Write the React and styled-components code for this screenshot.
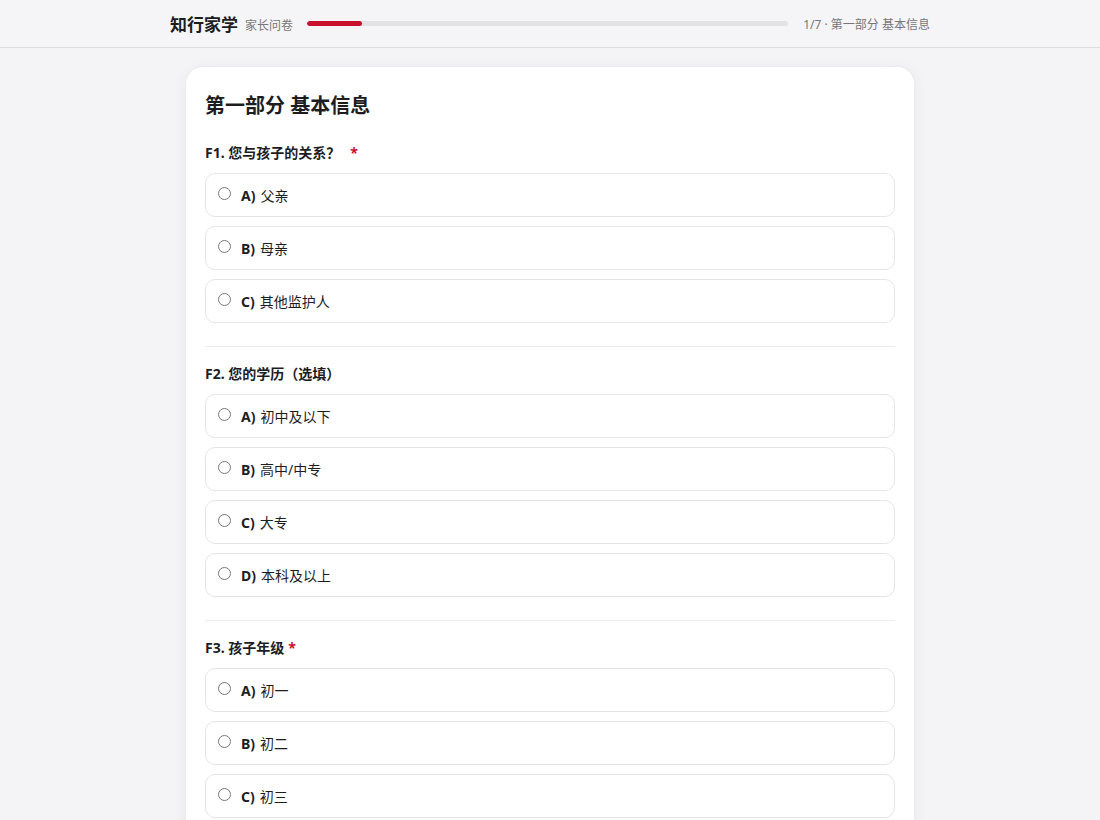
import styled, { createGlobalStyle } from "styled-components";

const GlobalStyle = createGlobalStyle`
  * { box-sizing: border-box; }
  body {
    margin: 0;
    background: #f4f4f6;
    font-family: "Noto Sans", "Noto Sans CJK SC", sans-serif;
    color: #1d1d1f;
  }
`;

const Header = styled.div`
  height: 48px;
  background: #f5f5f7;
  border-bottom: 1px solid #dedee0;
`;

const HeaderInner = styled.div`
  width: 760px;
  margin: 0 auto;
  height: 100%;
  display: flex;
  align-items: center;
`;

const Brand = styled.div`
  font-size: 17px;
  font-weight: 700;
  color: #1d1d1f;
`;

const SubBrand = styled.div`
  font-size: 12px;
  color: #777;
  margin-left: 7px;
  padding-top: 2px;
`;

const Track = styled.div`
  flex: 1;
  height: 5px;
  border-radius: 3px;
  background: #e3e3e5;
  margin: 0 15px 0 14px;
  overflow: hidden;
`;

const Fill = styled.div`
  height: 100%;
  background: #c8102e;
  border-radius: 3px;
`;

const Step = styled.div`
  font-size: 12px;
  color: #777;
`;

const Card = styled.div`
  width: 730px;
  margin: 18px auto 0;
  background: #fff;
  border-radius: 18px;
  border: 1px solid #ececee;
  box-shadow: 0 2px 14px rgba(0, 0, 0, 0.05);
  padding: 24px 19px 20px;
`;

const Title = styled.h1`
  margin: 0 0 22px;
  font-size: 20px;
  line-height: 30px;
  font-weight: 700;
`;

const Section = styled.div`
  padding-bottom: ${(p) => (p.last ? 0 : "23px")};
  margin-bottom: ${(p) => (p.last ? 0 : "17px")};
  border-bottom: ${(p) => (p.last ? "none" : "1px solid #ececee")};
`;

const Question = styled.div`
  font-size: 14px;
  line-height: 20px;
  font-weight: 700;
  margin-bottom: 10px;
`;

const Star = styled.span`
  color: #c8102e;
  margin-left: ${(p) => p.gap || "4px"};
`;

const Options = styled.div`
  display: flex;
  flex-direction: column;
  gap: 9px;
`;

const Option = styled.label`
  display: flex;
  align-items: center;
  height: 44px;
  padding: 0 12px;
  border: 1px solid #e5e5e7;
  border-radius: 10px;
  font-size: 14px;
  cursor: pointer;
`;

const Radio = styled.input`
  width: 13px;
  height: 13px;
  margin: -3px 10px 0 0;
`;

const Key = styled.b`
  font-weight: 700;
  margin-right: 5px;
`;

const questions = [
  {
    title: "F1. 您与孩子的关系？",
    required: true,
    gap: "10px",
    options: ["父亲", "母亲", "其他监护人"],
  },
  {
    title: "F2. 您的学历（选填）",
    options: ["初中及以下", "高中/中专", "大专", "本科及以上"],
  },
  {
    title: "F3. 孩子年级",
    required: true,
    options: ["初一", "初二", "初三", "高一", "高二", "高三"],
  },
];

const letters = "ABCDEFGH";

const App = () => {
  return (
    <>
      <GlobalStyle />
      <Header>
        <HeaderInner>
          <Brand>知行家学</Brand>
          <SubBrand>家长问卷</SubBrand>
          <Track>
            <Fill style={{ width: "11.5%" }} />
          </Track>
          <Step>1/7 · 第一部分 基本信息</Step>
        </HeaderInner>
      </Header>
      <Card>
        <Title>第一部分 基本信息</Title>
        {questions.map((q, qi) => (
          <Section key={q.title} last={qi === questions.length - 1}>
            <Question>
              {q.title}
              {q.required && <Star gap={q.gap}>*</Star>}
            </Question>
            <Options>
              {q.options.map((o, i) => (
                <Option key={o}>
                  <Radio type="radio" name={"q" + qi} />
                  <Key>{letters[i]})</Key>
                  {o}
                </Option>
              ))}
            </Options>
          </Section>
        ))}
      </Card>
    </>
  );
};

export default App;
